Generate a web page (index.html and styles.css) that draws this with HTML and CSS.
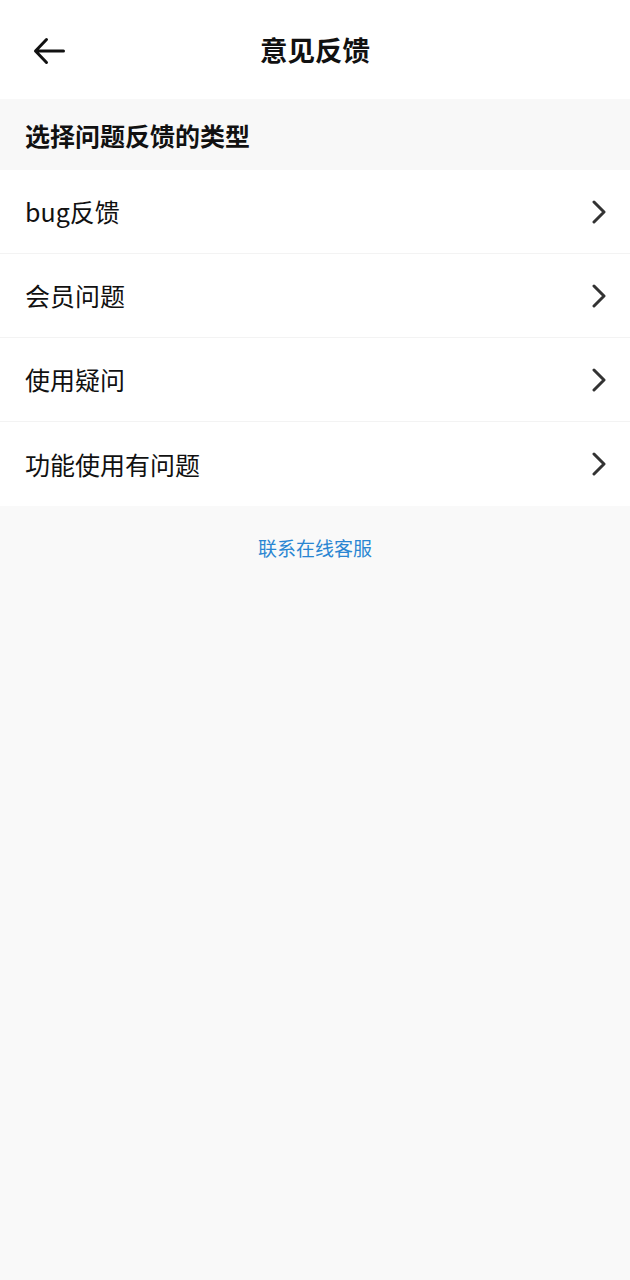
FILE: index.html
```html
<!DOCTYPE html>
<html lang="zh-CN">
<head>
<meta charset="utf-8">
<title>意见反馈</title>
<link rel="stylesheet" href="styles.css">
</head>
<body>
<header class="topbar">
  <button class="back" aria-label="返回">
    <svg width="32" height="30" viewBox="0 0 32 30"><path d="M2.5 15H30.5M13.5 3.5L2.5 15L13.5 26.5" fill="none" stroke="#111" stroke-width="3" stroke-linecap="round" stroke-linejoin="round"/></svg>
  </button>
  <h1 class="title">意见反馈</h1>
</header>
<div class="section-head">选择问题反馈的类型</div>
<ul class="list">
  <li class="row"><span>bug反馈</span><svg class="chev" width="16" height="24" viewBox="0 0 16 24"><path d="M3 2L13 12L3 22" fill="none" stroke="#333" stroke-width="3" stroke-linecap="round" stroke-linejoin="round"/></svg></li>
  <li class="row"><span>会员问题</span><svg class="chev" width="16" height="24" viewBox="0 0 16 24"><path d="M3 2L13 12L3 22" fill="none" stroke="#333" stroke-width="3" stroke-linecap="round" stroke-linejoin="round"/></svg></li>
  <li class="row"><span>使用疑问</span><svg class="chev" width="16" height="24" viewBox="0 0 16 24"><path d="M3 2L13 12L3 22" fill="none" stroke="#333" stroke-width="3" stroke-linecap="round" stroke-linejoin="round"/></svg></li>
  <li class="row"><span>功能使用有问题</span><svg class="chev" width="16" height="24" viewBox="0 0 16 24"><path d="M3 2L13 12L3 22" fill="none" stroke="#333" stroke-width="3" stroke-linecap="round" stroke-linejoin="round"/></svg></li>
</ul>
<div class="contact"><a class="link" href="#">联系在线客服</a></div>
</body>
</html>
```
FILE: styles.css
```css
html, body {
  margin: 0;
  padding: 0;
  background: #f9f9f9;
  font-family: "Noto Sans CJK SC", "Noto Sans", sans-serif;
  color: #111;
}
.topbar {
  height: 99px;
  background: #fff;
  display: flex;
  align-items: center;
  justify-content: center;
  position: relative;
}
.back {
  position: absolute;
  left: 33px;
  top: 36px;
  border: 0;
  padding: 0;
  background: none;
  display: flex;
}
.title {
  margin: 0;
  font-size: 27.5px;
  font-weight: 700;
  line-height: 1;
}
.section-head {
  height: 71px;
  display: flex;
  align-items: center;
  padding-left: 25px;
  font-size: 25px;
  font-weight: 700;
  background: #f8f8f8;
}
.list {
  list-style: none;
  margin: 0;
  padding: 0;
  background: #fff;
}
.row {
  height: 83px;
  display: flex;
  align-items: center;
  justify-content: space-between;
  padding: 0 23px 0 25px;
  font-size: 25px;
  border-bottom: 1px solid #f3f3f3;
}
.row:last-child {
  height: 84px;
  border-bottom: 0;
}
.row span {
  line-height: 1;
}
.chev {
  display: block;
}
.contact {
  display: flex;
  justify-content: center;
  padding-top: 29px;
}
.link {
  color: #2a86d2;
  font-size: 19px;
  text-decoration: none;
  line-height: 26px;
}
```
